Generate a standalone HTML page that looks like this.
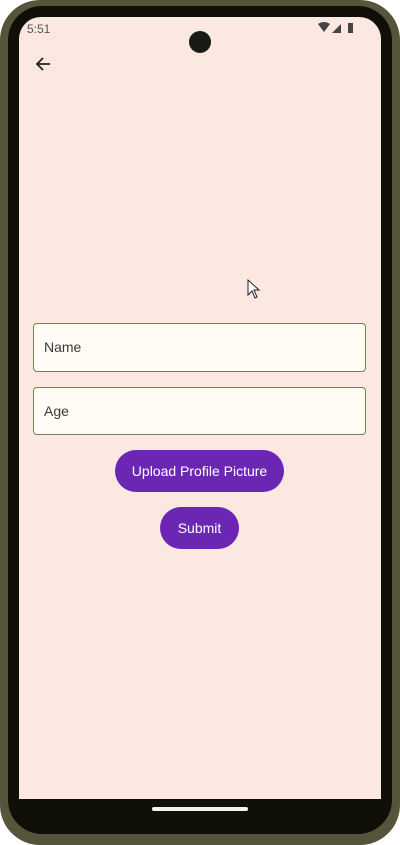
<!DOCTYPE html>
<html><head><style>
html,body{margin:0;padding:0;width:400px;height:845px;overflow:hidden;background:#fff;font-family:"Liberation Sans",sans-serif}
.frame{position:absolute;left:0;top:0;width:400px;height:845px;background:#55553c;border-radius:40px}
.inner{position:absolute;left:8px;top:6px;width:384px;height:828px;background:#101008;border-radius:34px}
.screen{position:absolute;left:19px;top:17px;width:362px;height:782px;background:#fbe8e1;border-radius:22px 22px 0 0}
.cam{position:absolute;left:189px;top:31px;width:22px;height:22px;border-radius:50%;background:#1a1a14}
.time{position:absolute;left:27px;top:22px;font-size:12px;color:#555}
.field{position:absolute;left:33px;width:333px;height:47px;border:1px solid #7d7d55;border-radius:4px;background:#fffcf6;box-sizing:border-box}
.field span{position:absolute;left:10px;top:15px;font-size:14px;color:#3a3a3a}
.btn{position:absolute;background:#6b27b3;color:#fff;font-size:14px;border-radius:22px;text-align:center;line-height:42px}
.bar{position:absolute;left:152px;top:807px;width:96px;height:4px;background:#f4f4e4;border-radius:2px}
</style></head><body>
<div class="frame"></div><div class="inner"></div>
<div class="screen"></div>
<div class="cam"></div>
<div class="time">5:51</div>
<svg style="position:absolute;left:318px;top:22px" width="40" height="12" viewBox="0 0 40 12">
<path d="M0 2 Q6 -2 12 2 L6 10 Z" fill="#444"/>
<path d="M14 11 L23 2 L23 11 Z" fill="#444"/>
<rect x="30" y="1" width="5" height="10" fill="#444"/>
</svg>
<svg style="position:absolute;left:34px;top:55px" width="18" height="18" viewBox="0 0 18 18">
<path d="M16 9 H3 M9 3 L3 9 L9 15" stroke="#222" stroke-width="1.8" fill="none"/>
</svg>
<svg style="position:absolute;left:246px;top:279px" width="16" height="22" viewBox="0 0 16 22">
<path d="M2 1 L2 16 L6 12 L9 19 L11 18 L8 11 L13 11 Z" fill="#fff" stroke="#222" stroke-width="1"/>
</svg>
<div class="field" style="top:323px;height:49px"><span>Name</span></div>
<div class="field" style="top:387px;height:48px"><span>Age</span></div>
<div class="btn" style="left:115px;top:450px;width:169px">Upload Profile Picture</div>
<div class="btn" style="left:160px;top:507px;width:79px">Submit</div>
<div class="bar"></div>
</body></html>
